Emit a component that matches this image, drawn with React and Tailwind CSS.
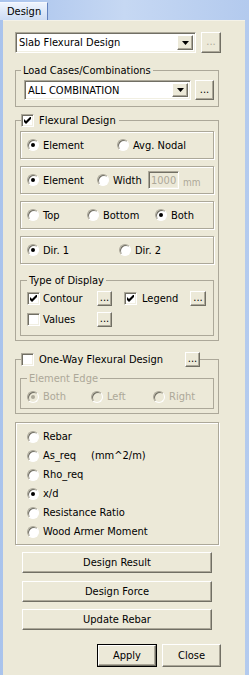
import React from 'react';

const raised =
  'bg-[#ece9d8] border border-t-white border-l-white border-b-[#716f64] border-r-[#716f64] shadow-[inset_-1px_-1px_0_#aca899]';
const sunken =
  'border border-t-[#aca899] border-l-[#aca899] border-b-white border-r-white shadow-[inset_1px_1px_0_#716f64,inset_-1px_-1px_0_#f1efe2]';

const Radio = ({ checked, disabled }) => (
  <span
    className={`inline-flex w-[12px] h-[12px] shrink-0 items-center justify-center rounded-full border border-t-[#aca899] border-l-[#aca899] border-b-white border-r-white shadow-[inset_1px_1px_0_#716f64] ${
      disabled ? 'bg-[#ece9d8]' : 'bg-white'
    }`}
  >
    {checked && (
      <span className={`w-[4px] h-[4px] rounded-full ${disabled ? 'bg-[#aca899]' : 'bg-black'}`} />
    )}
  </span>
);

const Check = ({ checked }) => (
  <span className={`inline-flex w-[13px] h-[13px] shrink-0 items-center justify-center bg-white ${sunken}`}>
    {checked && (
      <svg viewBox="0 0 7 7" className="w-[7px] h-[7px]">
        <path d="M0 2 L2 4 L7 -1 L7 2 L2 7 L0 5 Z" fill="black" />
      </svg>
    )}
  </span>
);

const Dots = ({ disabled, className = '' }) => (
  <div
    className={`${raised} flex items-center justify-center shrink-0 ${className} ${
      disabled ? 'text-[#aca899]' : 'text-black'
    }`}
  >
    <span className="leading-[8px] -mt-[1px]">...</span>
  </div>
);

const Combo = ({ text, className = '' }) => (
  <div className={`bg-white ${sunken} flex items-center ${className}`}>
    <span className="flex-1 pl-[3px] whitespace-nowrap overflow-hidden">{text}</span>
    <div className={`${raised} w-[16px] self-stretch m-[2px] flex items-center justify-center`}>
      <svg viewBox="0 0 7 4" className="w-[7px] h-[4px]">
        <path d="M0 0 H7 L3.5 4 Z" fill="black" />
      </svg>
    </div>
  </div>
);

const RadioItem = ({ label, checked, disabled, className = '' }) => (
  <div className={`flex items-center gap-[4px] whitespace-nowrap ${className}`}>
    <Radio checked={checked} disabled={disabled} />
    <span className={disabled ? 'text-[#aca899]' : ''}>{label}</span>
  </div>
);

const Box = ({ children }) => (
  <div className="h-[28px] border border-[#aca899] shadow-[inset_1px_1px_0_#fff,1px_1px_0_#fff] flex items-center pl-[6px]">
    {children}
  </div>
);

const Btn = ({ children, className = '' }) => (
  <div className={`${raised} flex items-center justify-center ${className}`}>{children}</div>
);

export default function App() {
  return (
    <div className="w-[249px] h-[675px] flex flex-col bg-gradient-to-r from-[#a9c3ec] via-[#c6d8f3] to-[#b3caee] text-[11px] leading-[13px] text-black overflow-hidden [font-family:'DejaVu_Sans_Condensed','Liberation_Sans',sans-serif]">
      {/* Tab strip */}
      <div className="h-[20px] flex items-end shrink-0">
        <div className="h-[18px] w-[48px] flex items-center pl-[7px] bg-gradient-to-b from-[#eef4fd] to-[#cddcf4] border-t border-t-[#f6f9fe] border-r border-r-[#6382be]">
          Design
        </div>
      </div>

      {/* Panel */}
      <div className="flex-1 ml-[3px] mr-[4px] bg-[#ece9d8] border-t border-t-[#f4f2e8] pl-[12px] pt-[11px] flex flex-col">
        <div className="flex gap-[5px]">
          <Combo text="Slab Flexural Design" className="w-[181px] h-[21px]" />
          <Dots disabled className="w-[20px] h-[21px]" />
        </div>

        <fieldset className="mt-[11px] w-[204px] border border-[#aca899]">
          <legend className="ml-[5px] px-[2px] leading-[13px]">Load Cases/Combinations</legend>
          <div className="flex gap-[4px] pl-[8px] pt-[3px] pb-[6px]">
            <Combo text="ALL COMBINATION" className="w-[167px] h-[20px]" />
            <Dots className="w-[19px] h-[20px]" />
          </div>
        </fieldset>

        <fieldset className="mt-[7px] w-[204px] border border-[#aca899]">
          <legend className="ml-[5px] pr-[3px]">
            <div className="flex items-center gap-[5px] h-[13px]">
              <Check checked />
              <span>Flexural Design</span>
            </div>
          </legend>
          <div className="px-[4px] pt-[4px] pb-[4px] flex flex-col">
            <Box>
              <RadioItem label="Element" checked className="w-[90px]" />
              <RadioItem label="Avg. Nodal" />
            </Box>
            <div className="mt-[7px]">
              <Box>
                <RadioItem label="Element" checked className="w-[70px]" />
                <RadioItem label="Width" className="w-[51px]" />
                <div className={`w-[31px] h-[18px] flex items-center pl-[2px] text-[#aca899] bg-[#ece9d8] ${sunken}`}>
                  1000
                </div>
                <span className="ml-[4px] mt-[4px] text-[10px] text-[#aca899]">mm</span>
              </Box>
            </div>
            <div className="mt-[7px]">
              <Box>
                <RadioItem label="Top" className="w-[60px]" />
                <RadioItem label="Bottom" className="w-[68px]" />
                <RadioItem label="Both" checked />
              </Box>
            </div>
            <div className="mt-[7px]">
              <Box>
                <RadioItem label="Dir. 1" checked className="w-[92px]" />
                <RadioItem label="Dir. 2" />
              </Box>
            </div>

            <fieldset className="mt-[10px] border border-[#aca899]">
              <legend className="ml-[6px] px-[2px] leading-[13px]">Type of Display</legend>
              <div className="pl-[6px] pb-[8px]">
                <div className="mt-[4px] h-[15px] flex items-center">
                  <div className="w-[70px] flex items-center gap-[3px]">
                    <Check checked />
                    <span>Contour</span>
                  </div>
                  <Dots className="w-[15px] h-[15px]" />
                  <div className="ml-[12px] w-[66px] flex items-center gap-[5px]">
                    <Check checked />
                    <span>Legend</span>
                  </div>
                  <Dots className="w-[16px] h-[15px]" />
                </div>
                <div className="mt-[6px] h-[15px] flex items-center">
                  <div className="w-[70px] flex items-center gap-[3px]">
                    <Check />
                    <span>Values</span>
                  </div>
                  <Dots className="w-[15px] h-[15px]" />
                </div>
              </div>
            </fieldset>
          </div>
        </fieldset>

        <fieldset className="mt-[11px] w-[204px] border border-[#aca899]">
          <legend className="ml-[5px]">
            <div className="w-[179px] h-[15px] flex items-center gap-[5px]">
              <Check />
              <span>One-Way Flexural Design</span>
              <Dots className="ml-auto w-[15px] h-[15px]" />
            </div>
          </legend>
          <div className="px-[4px] pb-[4px]">
            <fieldset className="mt-[5px] border border-[#aca899]">
              <legend className="ml-[6px] px-[2px] leading-[13px] text-[#aca899]">Element Edge</legend>
              <div className="pl-[6px] pt-[5px] pb-[5px] h-[23px] flex items-center">
                <RadioItem label="Both" checked disabled className="w-[64px]" />
                <RadioItem label="Left" disabled className="w-[62px]" />
                <RadioItem label="Right" disabled />
              </div>
            </fieldset>
          </div>
        </fieldset>

        <div className="mt-[8px] w-[204px] border border-[#aca899] shadow-[inset_1px_1px_0_#fff,1px_1px_0_#fff] pl-[11px] pt-[4px] pb-[3px]">
          {[
            ['Rebar', false],
            ['As_req', false, '(mm^2/m)'],
            ['Rho_req', false],
            ['x/d', true],
            ['Resistance Ratio', false],
            ['Wood Armer Moment', false],
          ].map(([label, checked, unit]) => (
            <div key={label} className="h-[19px] flex items-center gap-[4px]">
              <Radio checked={checked} />
              <span>{label}</span>
              {unit && <span className="ml-[11px]">{unit}</span>}
            </div>
          ))}
        </div>

        <Btn className="mt-[7px] ml-[7px] w-[190px] h-[21px]">Design Result</Btn>
        <Btn className="mt-[8px] ml-[7px] w-[190px] h-[21px]">Design Force</Btn>
        <Btn className="mt-[7px] ml-[7px] w-[190px] h-[21px]">Update Rebar</Btn>

        <div className="mt-[14px] flex">
          <div className="ml-[82px] w-[60px] h-[23px] border border-black flex">
            <Btn className="flex-1">Apply</Btn>
          </div>
          <Btn className="ml-[5px] w-[59px] h-[23px]">Close</Btn>
        </div>
      </div>
    </div>
  );
}
